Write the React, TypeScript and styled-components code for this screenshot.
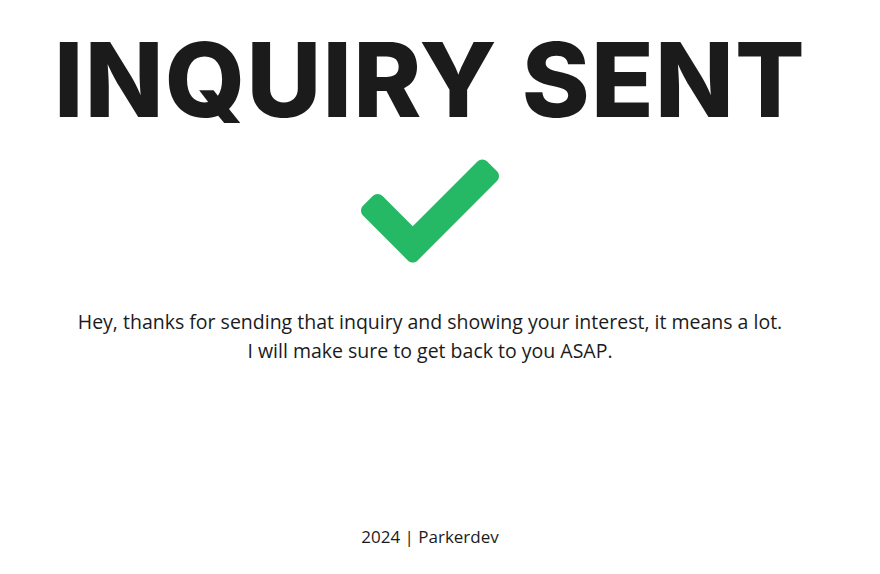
import React, { FC } from 'react';
import styled, { createGlobalStyle } from 'styled-components';

const GlobalStyle = createGlobalStyle`
  html, body {
    margin: 0;
    padding: 0;
    background: #ffffff;
  }
`;

const Page = styled.main`
  display: flex;
  flex-direction: column;
  align-items: center;
  width: 860px;
  height: 574px;
  color: #1b1b1b;
  text-align: center;
`;

const Title = styled.h1`
  margin: 20px 0 0;
  font-family: Inter, "Open Sans", sans-serif;
  font-weight: 800;
  font-size: 103px;
  line-height: 120px;
  letter-spacing: 1.2px;
  color: #1b1b1b;
`;

const Check = styled.svg`
  width: 138px;
  height: 138px;
  margin-top: 2px;
  fill: #25b865;
`;

const Message = styled.p`
  margin: 27px 0 0;
  font-family: "Open Sans", sans-serif;
  font-size: 19.5px;
  line-height: 29px;
  color: #1b1b1b;
`;

const Footer = styled.footer`
  margin-top: auto;
  margin-bottom: 26px;
  font-family: "Open Sans", sans-serif;
  font-size: 17px;
  color: #1b1b1b;
`;

const App: FC = () => {
  return (
    <>
      <GlobalStyle />
      <Page>
        <Title>INQUIRY SENT</Title>
        <Check viewBox="0 0 512 512">
          <path d="M173.898 439.404l-166.4-166.4c-9.997-9.997-9.997-26.206 0-36.204l36.203-36.204c9.997-9.998 26.207-9.998 36.204 0L192 312.69 432.095 72.596c9.997-9.997 26.207-9.997 36.204 0l36.203 36.204c9.997 9.997 9.997 26.206 0 36.204l-294.4 294.401c-9.998 9.997-26.207 9.997-36.204-.001z" />
        </Check>
        <Message>
          Hey, thanks for sending that inquiry and showing your interest, it means a lot.
          <br />
          I will make sure to get back to you ASAP.
        </Message>
        <Footer>2024 | Parkerdev</Footer>
      </Page>
    </>
  );
};

export default App;
